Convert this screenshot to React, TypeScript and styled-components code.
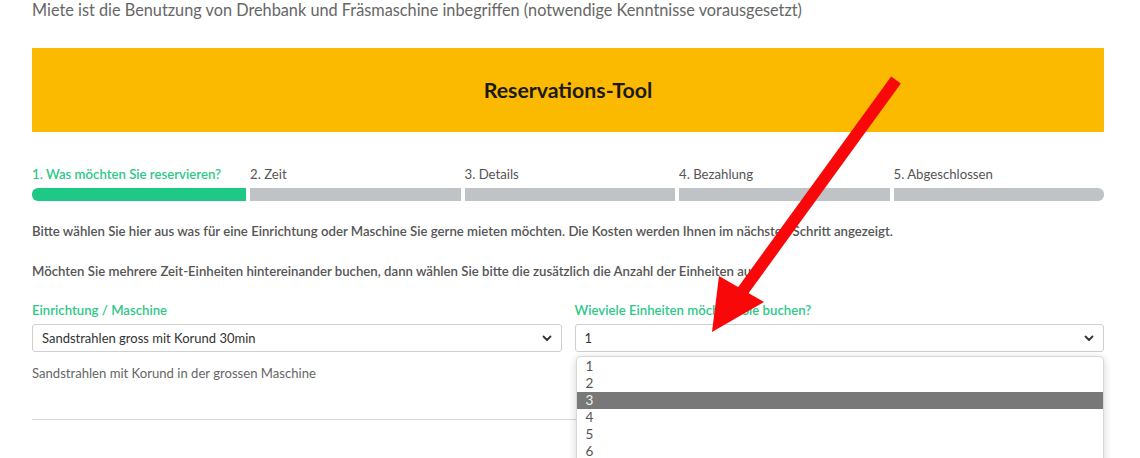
import React from "react";
import styled, { createGlobalStyle } from "styled-components";

const GlobalStyle = createGlobalStyle`
  html, body {
    margin: 0;
    padding: 0;
    background: #fff;
    font-family: Lato, "Open Sans", sans-serif;
    color: #555;
    overflow: hidden;
  }
`;

const Page = styled.div`
  position: relative;
  width: 1072px;
  margin-left: 32px;
  height: 458px;
`;

const Intro = styled.p`
  margin: 0;
  font-size: 16.3px;
  line-height: 20px;
  color: #666;
`;

const Banner = styled.div`
  margin-top: 28px;
  height: 84px;
  background: #fbb900;
  display: flex;
  align-items: center;
  justify-content: center;
  font-size: 21.3px;
  font-weight: 700;
  color: #1a1a1a;
`;

const Steps = styled.div`
  margin-top: 34px;
  display: grid;
  grid-template-columns: 214px repeat(4, 1fr);
  column-gap: 4px;
`;

const Step = styled.div``;

const StepLabel = styled.div<{ $active?: boolean }>`
  font-size: 13.2px;
  line-height: 16px;
  font-weight: ${(p) => (p.$active ? 600 : 400)};
  color: ${(p) => (p.$active ? "#2ec88a" : "#555")};
  white-space: nowrap;
`;

const StepBar = styled.div<{ $active?: boolean; $first?: boolean; $last?: boolean }>`
  margin-top: 6px;
  height: 13px;
  background: ${(p) => (p.$active ? "#1ec885" : "#bfc3c6")};
  border-radius: ${(p) => (p.$first ? "6px 0 0 6px" : p.$last ? "0 6px 6px 0" : "0")};
`;

const Info = styled.p`
  margin: 22px 0 0;
  font-size: 13.2px;
  line-height: 16px;
  font-weight: 600;
  color: #555;
  & + & {
    margin-top: 24px;
  }
`;

const Fields = styled.div`
  margin-top: 23px;
  display: grid;
  grid-template-columns: 1fr 1fr;
  column-gap: 13px;
`;

const Field = styled.div`
  position: relative;
`;

const FieldLabel = styled.div`
  font-size: 13.2px;
  line-height: 16px;
  font-weight: 600;
  color: #2ec88a;
`;

const SelectBox = styled.div`
  margin-top: 6px;
  height: 28px;
  box-sizing: border-box;
  border: 1px solid #cfcfcf;
  border-radius: 3px;
  display: flex;
  align-items: center;
  justify-content: space-between;
  padding: 0 9px;
  font-size: 13px;
  color: #333;
`;

const Help = styled.div`
  margin-top: 13px;
  font-size: 13.1px;
  line-height: 16px;
  color: #666;
`;

const Divider = styled.hr`
  margin: 38px 0 0;
  border: none;
  border-top: 1px solid #d6d6d6;
`;

const OptionList = styled.ul`
  position: absolute;
  left: 1px;
  right: 0;
  top: 54px;
  margin: 0;
  padding: 1px 0 0;
  list-style: none;
  background: #fff;
  border: 1px solid #d8d8d8;
  border-bottom: none;
  border-radius: 5px 5px 0 0;
  box-shadow: 0 2px 8px rgba(0, 0, 0, 0.18);
  height: 110px;
  overflow: hidden;
`;

const Option = styled.li<{ $selected?: boolean }>`
  height: 17px;
  line-height: 17px;
  padding-left: 9px;
  font-size: 13.5px;
  color: ${(p) => (p.$selected ? "#f2f2f2" : "#555")};
  background: ${(p) => (p.$selected ? "#787878" : "transparent")};
`;

const ArrowLayer = styled.svg`
  position: absolute;
  left: -32px;
  top: 0;
  width: 1140px;
  height: 458px;
  pointer-events: none;
`;

const Chevron = () => (
  <svg width="10" height="7" viewBox="0 0 10 7">
    <path d="M1.5 1.5 L5 5 L8.5 1.5" fill="none" stroke="#333" strokeWidth="1.8" strokeLinecap="round" strokeLinejoin="round" />
  </svg>
);

const steps = ["1. Was möchten Sie reservieren?", "2. Zeit", "3. Details", "4. Bezahlung", "5. Abgeschlossen"];

export default function App() {
  return (
    <>
      <GlobalStyle />
      <Page>
        <Intro>Miete ist die Benutzung von Drehbank und Fräsmaschine inbegriffen (notwendige Kenntnisse vorausgesetzt)</Intro>
        <Banner>Reservations-Tool</Banner>
        <Steps>
          {steps.map((s, i) => (
            <Step key={s}>
              <StepLabel $active={i === 0}>{s}</StepLabel>
              <StepBar $active={i === 0} $first={i === 0} $last={i === steps.length - 1} />
            </Step>
          ))}
        </Steps>
        <Info>
          Bitte wählen Sie hier aus was für eine Einrichtung oder Maschine Sie gerne mieten möchten. Die Kosten werden Ihnen im nächsten Schritt angezeigt.
        </Info>
        <Info>
          Möchten Sie mehrere Zeit-Einheiten hintereinander buchen, dann wählen Sie bitte die zusätzlich die Anzahl der Einheiten aus.
        </Info>
        <Fields>
          <Field>
            <FieldLabel>Einrichtung / Maschine</FieldLabel>
            <SelectBox>
              <span>Sandstrahlen gross mit Korund 30min</span>
              <Chevron />
            </SelectBox>
            <Help>Sandstrahlen mit Korund in der grossen Maschine</Help>
          </Field>
          <Field>
            <FieldLabel>Wieviele Einheiten möchten Sie buchen?</FieldLabel>
            <SelectBox>
              <span>1</span>
              <Chevron />
            </SelectBox>
            <OptionList>
              {[1, 2, 3, 4, 5, 6].map((n) => (
                <Option key={n} $selected={n === 3}>
                  {n}
                </Option>
              ))}
            </OptionList>
          </Field>
        </Fields>
        <Divider />
        <ArrowLayer viewBox="0 0 1140 458">
          <line x1="896" y1="80" x2="742" y2="292" stroke="#f80808" strokeWidth="12" />
          <polygon points="712,332 719,276 764,302" fill="#f80808" />
        </ArrowLayer>
      </Page>
    </>
  );
}
